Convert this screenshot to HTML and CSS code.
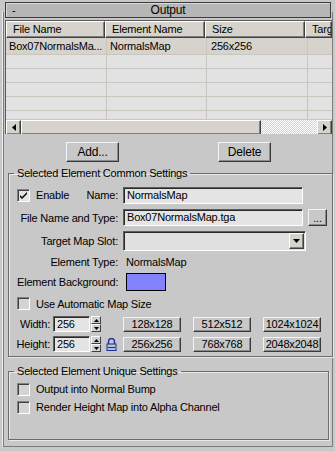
FILE: index.html
```html
<!DOCTYPE html>
<html lang="en">
<head>
    <meta charset="UTF-8">
    <title>Output</title>
    <link rel="stylesheet" href="styles.css">
</head>
<body>
    <div class="rollout">
        <div class="titlebar">
            <span class="minus">-</span>
            <span class="title">Output</span>
        </div>

        <!-- element list -->
        <div class="listview">
            <div class="lv-head">
                <div class="lv-col c1">File Name</div>
                <div class="lv-col c2">Element Name</div>
                <div class="lv-col c3">Size</div>
                <div class="lv-col c4">Targ</div>
            </div>
            <div class="lv-row first">
                <div class="lv-cell c1">Box07NormalsMa...</div>
                <div class="lv-cell c2">NormalsMap</div>
                <div class="lv-cell c3">256x256</div>
                <div class="lv-cell c4"></div>
            </div>
            <div class="lv-row"><div class="lv-cell c1"></div><div class="lv-cell c2"></div><div class="lv-cell c3"></div><div class="lv-cell c4"></div></div>
            <div class="lv-row"><div class="lv-cell c1"></div><div class="lv-cell c2"></div><div class="lv-cell c3"></div><div class="lv-cell c4"></div></div>
            <div class="lv-row"><div class="lv-cell c1"></div><div class="lv-cell c2"></div><div class="lv-cell c3"></div><div class="lv-cell c4"></div></div>
            <div class="lv-row"><div class="lv-cell c1"></div><div class="lv-cell c2"></div><div class="lv-cell c3"></div><div class="lv-cell c4"></div></div>
            <div class="lv-row last"><div class="lv-cell c1"></div><div class="lv-cell c2"></div><div class="lv-cell c3"></div><div class="lv-cell c4"></div></div>
            <div class="hscroll">
                <div class="sb-btn"><svg width="4" height="7" viewBox="0 0 4 7"><path d="M4 0 L0 3.5 L4 7 Z" fill="#000"/></svg></div>
                <div class="sb-thumb"></div>
                <div class="sb-track"></div>
                <div class="sb-btn"><svg width="4" height="7" viewBox="0 0 4 7"><path d="M0 0 L4 3.5 L0 7 Z" fill="#000"/></svg></div>
            </div>
        </div>

        <div class="btn-row">
            <button class="btn add">Add...</button>
            <button class="btn delete">Delete</button>
        </div>

        <fieldset class="group common">
            <legend>Selected Element Common Settings</legend>
            <div class="row r-name">
                <div class="lbl split">
                    <span class="check checked"><svg width="9" height="9" viewBox="0 0 9 9"><path d="M1 4 L3 6 L8 1 L8 3 L3 8 L1 6 Z" fill="#000"/></svg></span>
                    <span class="check-text">Enable</span>
                    <span class="push">Name:</span>
                </div>
                <div class="field wide">NormalsMap</div>
            </div>
            <div class="row r-file">
                <div class="lbl">File Name and Type:</div>
                <div class="field wide">Box07NormalsMap.tga</div>
                <button class="btn dots">...</button>
            </div>
            <div class="row r-slot">
                <div class="lbl">Target Map Slot:</div>
                <div class="combo">
                    <div class="combo-text"></div>
                    <div class="combo-btn"><svg width="7" height="4" viewBox="0 0 7 4"><path d="M0 0 L7 0 L3.5 4 Z" fill="#000"/></svg></div>
                </div>
            </div>
            <div class="row r-type">
                <div class="lbl">Element Type:</div>
                <div class="value">NormalsMap</div>
            </div>
            <div class="row r-bg">
                <div class="lbl left">Element Background:</div>
                <div class="swatch"></div>
            </div>
            <div class="row r-auto">
                <span class="check"></span>
                <span class="check-text">Use Automatic Map Size</span>
            </div>
            <div class="row r-size">
                <div class="size-left">
                    <span class="size-lbl">Width:</span>
                    <div class="field num">256</div>
                    <div class="spinner">
                        <div class="spin-up"><svg width="5" height="3" viewBox="0 0 5 3"><path d="M0 3 L5 3 L2.5 0 Z" fill="#000"/></svg></div>
                        <div class="spin-down"><svg width="5" height="3" viewBox="0 0 5 3"><path d="M0 0 L5 0 L2.5 3 Z" fill="#000"/></svg></div>
                    </div>
                </div>
                <div class="presets">
                    <button class="btn preset">128x128</button>
                    <button class="btn preset">512x512</button>
                    <button class="btn preset">1024x1024</button>
                </div>
            </div>
            <div class="row r-size">
                <div class="size-left">
                    <span class="size-lbl">Height:</span>
                    <div class="field num">256</div>
                    <div class="spinner">
                        <div class="spin-up"><svg width="5" height="3" viewBox="0 0 5 3"><path d="M0 3 L5 3 L2.5 0 Z" fill="#000"/></svg></div>
                        <div class="spin-down"><svg width="5" height="3" viewBox="0 0 5 3"><path d="M0 0 L5 0 L2.5 3 Z" fill="#000"/></svg></div>
                    </div>
                    <div class="lock">
                        <svg width="11" height="13" viewBox="0 0 11 13">
                            <path d="M2.5 6 V3.5 A3 3 0 0 1 8.5 3.5 V6" fill="none" stroke="#1c2a9a" stroke-width="1.4"/>
                            <rect x="1" y="6" width="9" height="6.5" fill="#b9bed6" stroke="#1c2a9a" stroke-width="1"/>
                            <rect x="2" y="9" width="7" height="1" fill="#1c2a9a"/>
                        </svg>
                    </div>
                </div>
                <div class="presets">
                    <button class="btn preset">256x256</button>
                    <button class="btn preset">768x768</button>
                    <button class="btn preset">2048x2048</button>
                </div>
            </div>
        </fieldset>

        <fieldset class="group unique">
            <legend>Selected Element Unique Settings</legend>
            <div class="row r-check">
                <span class="check"></span>
                <span class="check-text">Output into Normal Bump</span>
            </div>
            <div class="row r-check">
                <span class="check"></span>
                <span class="check-text">Render Height Map into Alpha Channel</span>
            </div>
        </fieldset>
    </div>
</body>
</html>
```

FILE: styles.css
```css
body {
    margin: 0;
    background: #c8c8c8;
    font-family: 'Liberation Sans', Arial, sans-serif;
    font-size: 11px;
    letter-spacing: -0.2px;
    color: #000;
}

/* rollout frame */
.rollout {
    margin: 11px 2px 0 3px;
    height: 434px;
    border: 1px solid #7c7c7c;
    border-top-color: #e6e6e6;
    box-shadow: -1px 0 0 #ececec, 0 1px 0 #ececec;
}

.titlebar {
    margin: -10px 0 2px 1px;
    width: 324px;
    height: 14px;
    border: 1px solid #3c3c3c;
    background: #b6b6b6;
    box-shadow: inset 1px 1px 0 #d8d8d8;
    display: flex;
    align-items: center;
}

.minus {
    margin-left: 6px;
    width: 10px;
}

.title {
    flex: 1;
    text-align: center;
    margin-right: 16px;
    font-size: 12px;
}

/* list view */
.listview {
    margin-left: 1px;
    height: 113px;
    border-left: 1px solid #5a5a5a;
    border-top: 1px solid #5a5a5a;
    background: #e2e2e2;
    overflow: hidden;
}

.lv-head {
    display: flex;
    height: 17px;
}

.lv-col {
    height: 15px;
    line-height: 15px;
    padding-left: 6px;
    background: #d6d3cc;
    border: 1px solid;
    border-color: #fff #404040 #404040 #fff;
    box-shadow: inset -1px -1px 0 #808080;
    white-space: nowrap;
    overflow: hidden;
}

.c1 { width: 91px; }
.c2 { width: 92px; }
.c3 { width: 92px; }
.c4 { flex: 1; }

.lv-row {
    display: flex;
    height: 14px;
}

.lv-row.first {
    height: 17px;
    background: #d6d3cc;
}

.lv-row.last {
    height: 9px;
}

.lv-cell {
    border-right: 1px solid #c9c6bf;
    border-bottom: 1px solid #c9c6bf;
    white-space: nowrap;
    overflow: hidden;
    line-height: 16px;
}

.lv-cell.c1 { width: 97px; padding-left: 3px; }
.lv-cell.c2 { width: 96px; padding-left: 3px; }
.lv-cell.c3 { width: 96px; padding-left: 4px; }
.lv-cell.c4 { border-right: none; }

.hscroll {
    display: flex;
    height: 15px;
    border-bottom: 1px solid #d6d3cc;
}

.sb-btn {
    width: 13px;
    height: 13px;
    background: #d6d3cc;
    border: 1px solid;
    border-color: #fff #404040 #404040 #fff;
    box-shadow: inset -1px -1px 0 #808080;
    display: flex;
    align-items: center;
    justify-content: center;
}

.sb-thumb {
    width: 238px;
    height: 13px;
    background: #d6d3cc;
    border: 1px solid;
    border-color: #fff #404040 #404040 #fff;
    box-shadow: inset -1px -1px 0 #808080;
}

.sb-track {
    flex: 1;
    background: repeating-conic-gradient(#fff 0 25%, #d6d3cc 0 50%) 0 0 / 2px 2px;
}

/* buttons */
.btn {
    font-family: 'Liberation Sans', Arial, sans-serif;
    font-size: 11px;
    letter-spacing: -0.2px;
    color: #000;
    background: #c8c8c8;
    border: 1px solid;
    border-color: #f4f4f4 #3a3a3a #3a3a3a #f4f4f4;
    box-shadow: inset -1px -1px 0 #8a8a8a;
    padding: 0;
}

.btn-row {
    display: flex;
    padding: 8px 0 0 62px;
    gap: 99px;
}

.btn-row .btn {
    width: 53px;
    height: 20px;
    font-size: 12px;
}

/* group boxes */
.group {
    margin: 5px 3px 0 4px;
    padding: 6px 5px 4px 5px;
    border: 1px solid #6c6c6c;
    box-shadow: 1px 1px 0 #e8e8e8, inset 1px 1px 0 #e8e8e8;
}

.group legend {
    padding: 0 3px;
    line-height: 13px;
}

.row {
    display: flex;
    align-items: center;
}

.lbl {
    width: 104px;
    margin-right: 5px;
    text-align: right;
    white-space: nowrap;
}

.lbl.split {
    display: flex;
    align-items: center;
}

.lbl.left {
    text-align: left;
    padding-left: 3px;
    width: 101px;
}

.push {
    margin-left: auto;
}

.check {
    width: 11px;
    height: 11px;
    margin-left: 3px;
    border: 1px solid;
    border-color: #808080 #fff #fff #808080;
    box-shadow: inset 1px 1px 0 #404040;
    background: #d4d4d4;
    display: flex;
    align-items: center;
    justify-content: center;
    flex-shrink: 0;
}

.check.checked {
    background: #e4e4e4;
}

.check-text {
    margin-left: 6px;
    white-space: nowrap;
}

.field {
    height: 15px;
    line-height: 15px;
    border: 1px solid;
    border-color: #5c5c5c #fff #fff #5c5c5c;
    box-shadow: inset 1px 1px 0 #2a2a2a;
    background: #e4e4e4;
    padding-left: 3px;
    white-space: nowrap;
}

.field.wide {
    width: 175px;
}

.r-name { height: 18px; }
.r-file { height: 17px; margin-top: 5px; }
.r-slot { height: 20px; margin-top: 5px; }
.r-type { height: 14px; margin-top: 4px; }
.r-bg { height: 18px; margin-top: 4px; }
.r-auto { height: 15px; margin-top: 5px; }
.r-size { height: 16px; margin-top: 5px; }
.r-size + .r-size { margin-top: 4px; }
.r-check { height: 14px; margin-top: 4px; }
.r-check:first-of-type { margin-top: 0; }

.btn.dots {
    width: 19px;
    height: 17px;
    margin-left: 5px;
}

.combo {
    width: 179px;
    height: 17px;
    display: flex;
    border: 1px solid;
    border-color: #5c5c5c #fff #fff #5c5c5c;
    box-shadow: inset 1px 1px 0 #2a2a2a;
    background: #e0e0e0;
    padding: 1px 1px 0 1px;
}

.combo-text {
    flex: 1;
}

.combo-btn {
    width: 13px;
    height: 14px;
    background: #d6d3cc;
    border: 1px solid;
    border-color: #fff #404040 #404040 #fff;
    box-shadow: inset -1px -1px 0 #808080;
    display: flex;
    align-items: center;
    justify-content: center;
}

.value {
    padding-left: 3px;
}

.swatch {
    width: 38px;
    height: 16px;
    margin-left: 3px;
    border: 1px solid #000;
    background: #8282fe;
}

.size-left {
    width: 104px;
    margin-right: 5px;
    display: flex;
    align-items: center;
}

.size-lbl {
    width: 36px;
    text-align: right;
    margin-right: 3px;
}

.field.num {
    width: 32px;
    height: 14px;
    line-height: 14px;
}

.spinner {
    width: 10px;
    height: 16px;
    margin-left: 1px;
    display: flex;
    flex-direction: column;
}

.spin-up,
.spin-down {
    height: 6px;
    background: #d0d0d0;
    border: 1px solid;
    border-color: #fff #404040 #404040 #fff;
    display: flex;
    align-items: center;
    justify-content: center;
}

.lock {
    margin-left: 4px;
    width: 13px;
    height: 15px;
    display: flex;
    align-items: center;
    justify-content: center;
}

.presets {
    display: flex;
    gap: 12px;
}

.btn.preset {
    width: 58px;
    height: 15px;
    line-height: 12px;
}

.group.unique {
    margin-top: 8px;
    padding: 4px 5px 25px 5px;
}
```
